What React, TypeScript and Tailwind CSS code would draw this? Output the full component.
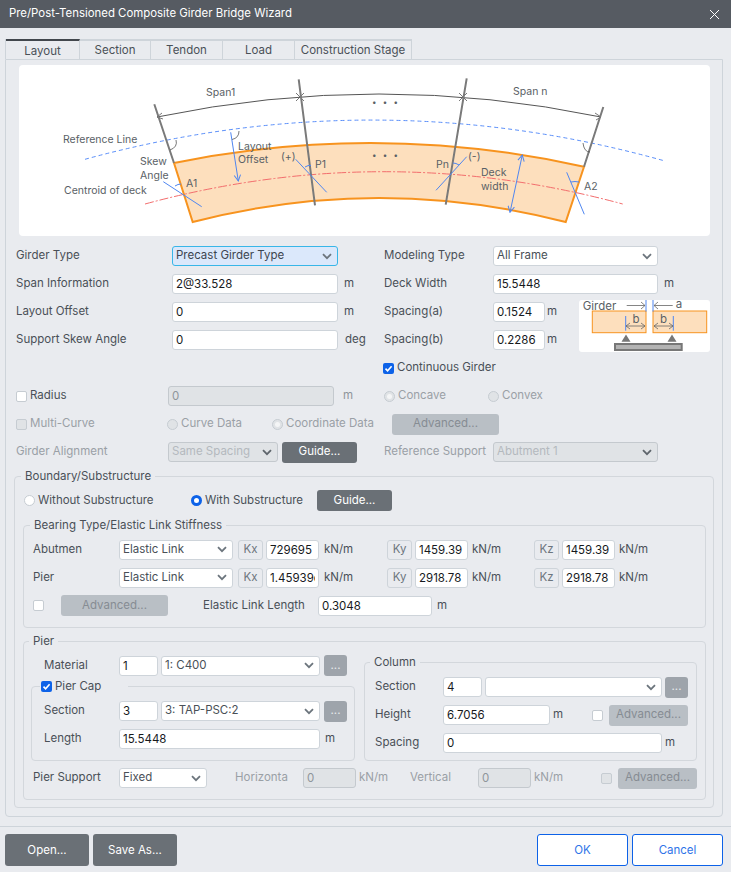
import React from "react";

const Chevron = ({ dim }: { dim?: boolean }) => (
  <svg width="10" height="7" viewBox="0 0 10 7" className="shrink-0">
    <path d="M1 1.2 L5 5.2 L9 1.2" fill="none" stroke={dim ? "#5f666d" : "#6c757d"} strokeWidth="1.8" />
  </svg>
);

const Inp = ({ v, w, off }: { v: string; w: string; off?: boolean }) => (
  <input
    readOnly
    value={v}
    className={`${w} h-[20px] shrink-0 rounded-[3px] border px-[3px] text-[11.5px] outline-none ${
      off ? "border-[#c4c9ce] bg-[#e0e3e6] text-[#8f959b]" : "border-[#ced4da] bg-white text-[#16191c]"
    }`}
  />
);

const Sel = ({ v, w, off, focus }: { v: string; w: string; off?: boolean; focus?: boolean }) => (
  <div
    className={`${w} flex h-[20px] shrink-0 items-center justify-between rounded-[3px] border pl-[3px] pr-[5px] text-[11.5px] ${
      focus
        ? "border-[#38b6e8] bg-[#dbe8fb] text-[#3d4550]"
        : off
          ? "border-[#c4c9ce] bg-[#e0e3e6] text-[#b4b9be]"
          : "border-[#ced4da] bg-white text-[#495057]"
    }`}
  >
    <span className="truncate">{v}</span>
    <Chevron dim={off} />
  </div>
);

const Btn = ({ t, w, kind }: { t: string; w: string; kind: "dark" | "off" | "dots" }) => (
  <button
    className={`${w} h-[21px] shrink-0 rounded-[3px] text-[11.5px] ${
      kind === "dark"
        ? "bg-[#6a7076] text-white"
        : kind === "off"
          ? "bg-[#b9bfc5] text-[#868c93]"
          : "bg-[#9ea4ab] text-[#e8eaec]"
    }`}
  >
    {t}
  </button>
);

const Check = ({ on, off }: { on?: boolean; off?: boolean }) =>
  on ? (
    <span className="flex h-[11px] w-[11px] shrink-0 items-center justify-center rounded-[2px] bg-[#0d62e8]">
      <svg width="9" height="9" viewBox="0 0 9 9">
        <path d="M1.5 4.6 L3.6 6.8 L7.6 2.2" fill="none" stroke="white" strokeWidth="1.6" />
      </svg>
    </span>
  ) : (
    <span
      className={`h-[11px] w-[11px] shrink-0 rounded-[2px] border border-[#c6ccd2] ${off ? "bg-[#e0e3e6]" : "bg-white"}`}
    />
  );

const Radio = ({ on, off, inner }: { on?: boolean; off?: boolean; inner?: boolean }) =>
  on ? (
    <span className="h-[11px] w-[11px] shrink-0 rounded-full border-[3px] border-[#0d62e8] bg-white" />
  ) : (
    <span
      className={`flex h-[11px] w-[11px] shrink-0 items-center justify-center rounded-full border border-[#c6ccd2] ${
        off ? "bg-[#e0e3e6]" : "bg-white"
      }`}
    >
      {inner && <span className="h-[5px] w-[5px] rounded-full bg-[#f4f5f6]" />}
    </span>
  );

const Row = ({ children, className = "" }: { children: React.ReactNode; className?: string }) => (
  <div className={`flex h-[28px] items-center ${className}`}>{children}</div>
);

const Box = ({ t }: { t: string }) => (
  <span className="ml-[5px] flex h-[20px] w-[25px] shrink-0 items-center justify-center rounded-[3px] border border-[#ced4da] text-[11.5px] text-[#6c757d]">
    {t}
  </span>
);

const Diagram = () => (
  <svg viewBox="19 65 691 171" className="block h-[171px] w-[691px]" fontFamily="Inter, sans-serif" fontSize="10.5" fill="#5a5f66">
    <defs>
      <marker id="ab" markerWidth="8" markerHeight="8" refX="7" refY="4" orient="auto-start-reverse">
        <path d="M1 .8 L7 4 L1 7.2" fill="none" stroke="#4f86f0" strokeWidth="1" />
      </marker>
    </defs>
    <path d="M174 163 Q379 121 584 166.7 L565.7 222 Q379 174 192.7 222 Z" fill="#fddfbd" stroke="#f7931e" strokeWidth="2" />
    <path d="M85 159.3 Q375 80 665 161" fill="none" stroke="#5b8ff9" strokeWidth="1" strokeDasharray="4 3" />
    <path d="M145 204 Q384 139.4 622.7 204" fill="none" stroke="#f26d6d" strokeWidth="1" strokeDasharray="9 2 2 2" />
    <path d="M157 117 Q379 71 601 117" fill="none" stroke="#555" strokeWidth="1" />
    <path d="M162 113 L157 117 L163 119 M595 113 L601 117 L596 120 M296 93 L304 101 M304 93 L296 101 M459 93 L467 101 M467 93 L459 101" fill="none" stroke="#555" strokeWidth="0.8" />
    <path d="M154.3 104.3 L174 163 M298.7 79.3 L315 205.3 M466.7 78.3 L445.7 204.7 M603.3 107 L584 166.7" stroke="#7a7a7a" strokeWidth="2" fill="none" />
    <path d="M230.7 132.3 L238.3 181" stroke="#4f86f0" strokeWidth="1" markerEnd="url(#ab)" fill="none" />
    <path d="M522.3 155 L510 212.3" stroke="#4f86f0" strokeWidth="1" markerStart="url(#ab)" markerEnd="url(#ab)" fill="none" />
    <path d="M163.3 181.7 L201.7 206.7 M295.7 159.3 L326.7 192.3 M466.7 156.7 L436 190.3 M566.7 172.3 L584.3 214.3" stroke="#4f86f0" strokeWidth="1" fill="none" />
    <path d="M175 186 Q178 184 181 184 M305 167 Q308 165 311 165.5 M453 163 Q456 163 459 165 M571 182 Q575 181 579 182" stroke="#4f86f0" strokeWidth="1" fill="none" />
    <path d="M176 140 Q178 147 170 150 M239 131 Q239 138 232 139.5 M583 143 Q584 152 590 152" stroke="#555" strokeWidth="0.8" fill="none" />
    <text x="206" y="96">Span1</text>
    <text x="513" y="95">Span n</text>
    <text x="372" y="105" fontSize="8" letterSpacing="2">• • •</text>
    <text x="372" y="158" fontSize="8" letterSpacing="2">• • •</text>
    <text x="63" y="143">Reference Line</text>
    <text x="140" y="165">Skew</text>
    <text x="140" y="179">Angle</text>
    <text x="64" y="194">Centroid of deck</text>
    <text x="186" y="187">A1</text>
    <text x="238" y="150">Layout</text>
    <text x="238" y="163">Offset</text>
    <text x="281" y="160">(+)</text>
    <text x="315" y="168">P1</text>
    <text x="436" y="168">Pn</text>
    <text x="468" y="160">(-)</text>
    <text x="481" y="176">Deck</text>
    <text x="481" y="190">width</text>
    <text x="584" y="190">A2</text>
  </svg>
);

const Mini = () => (
  <svg viewBox="0 0 131 52" className="ml-[22px] mt-[-3px] h-[52px] w-[131px] overflow-visible rounded-[3px] bg-white" fontFamily="Inter, sans-serif" fontSize="11.5" fill="#5a5f66">
    <rect x="13.3" y="11" width="53.7" height="21.7" fill="#fddfbd" stroke="#f7931e" />
    <rect x="74" y="11" width="53.7" height="21.7" fill="#fddfbd" stroke="#f7931e" />
    <rect x="36" y="44" width="66.7" height="6" fill="#b3b3b3" stroke="#777" strokeWidth="2" />
    <path d="M47 34.5 L51.5 41.7 L42.5 41.7 Z M93 34.5 L97.5 41.7 L88.5 41.7 Z" fill="#777" />
    <path d="M67 0 V11.6 M74 0 V11.6 M46.7 16 V30.7 M94.3 16 V30.7" stroke="#4f86f0" fill="none" />
    <path d="M47.7 5.5 H66 M62 2 L66 5.5 L62 9 M93.7 5.5 H75 M79 2 L75 5.5 L79 9 M47 26 H66 M51 23 L47 26 L51 29 M62 23 L66 26 L62 29 M75 26 H94 M79 23 L75 26 L79 29 M90 23 L94 26 L90 29" stroke="#666" strokeWidth="0.8" fill="none" />
    <text x="3.7" y="10">Girder</text>
    <text x="96.7" y="8">a</text>
    <text x="53.5" y="22.5">b</text>
    <text x="81" y="22.5">b</text>
  </svg>
);

const Tab = ({ t, w, active }: { t: string; w: string; active?: boolean }) => (
  <div
    className={`${w} flex h-[20px] items-center justify-center border-r border-[#ced4da] text-[11.5px] text-[#495057] ${
      active ? "border-t-2 border-t-[#42474d] pt-[3px]" : "border-t-2 border-t-[#ced4da] pt-[1px]"
    }`}
  >
    {t}
  </div>
);

const Stiff = ({ label, x, y, z }: { label: string; x: string; y: string; z: string }) => (
  <div className="mb-[8px] flex h-[20px] items-center">
    <span className="w-[86px]">{label}</span>
    <Sel v="Elastic Link" w="w-[114px]" />
    <Box t="Kx" />
    <span className="ml-[3px]"><Inp v={x} w="w-[53px]" /></span>
    <span className="ml-[5px] w-[58px]">kN/m</span>
    <Box t="Ky" />
    <span className="ml-[3px]"><Inp v={y} w="w-[53px]" /></span>
    <span className="ml-[4px] w-[57px]">kN/m</span>
    <Box t="Kz" />
    <span className="ml-[3px]"><Inp v={z} w="w-[53px]" /></span>
    <span className="ml-[4px]">kN/m</span>
  </div>
);

export default function App() {
  return (
    <div className="flex h-screen w-full flex-col overflow-hidden bg-[#e9ebef] font-[Inter,sans-serif] text-[11.5px] text-[#495057]">
      <div className="flex h-[28px] shrink-0 items-center justify-between bg-[#565b62] pl-[9px] pr-[11px] text-[11.4px] text-white">
        <span>Pre/Post-Tensioned Composite Girder Bridge Wizard</span>
        <svg width="11" height="11" viewBox="0 0 11 11">
          <path d="M1 1 L10 10 M10 1 L1 10" stroke="white" strokeWidth="1" fill="none" />
        </svg>
      </div>

      <div className="ml-[5px] mt-[11px] flex">
        <div className="flex border-l border-[#ced4da]">
          <Tab t="Layout" w="w-[74px]" active />
          <Tab t="Section" w="w-[71px]" />
          <Tab t="Tendon" w="w-[72px]" />
          <Tab t="Load" w="w-[72px]" />
          <Tab t="Construction Stage" w="w-[117px]" />
        </div>
      </div>

      <div className="ml-[5px] h-[758px] w-[718px] shrink-0 rounded-b-[4px] border border-[#ced4da]">
        <div className="ml-[13px] mt-[5px] w-[691px] overflow-hidden rounded-[4px] bg-white">
          <Diagram />
        </div>

        <div className="ml-[10px] mt-[6px]">
          <div className="flex">
            <div className="w-[368px]">
              <Row><span className="w-[156px]">Girder Type</span><Sel v="Precast Girder Type" w="w-[166px]" focus /></Row>
              <Row><span className="w-[156px]">Span Information</span><Inp v="2@33.528" w="w-[166px]" /><span className="ml-[6px]">m</span></Row>
              <Row><span className="w-[156px]">Layout Offset</span><Inp v="0" w="w-[166px]" /><span className="ml-[6px]">m</span></Row>
              <Row><span className="w-[156px]">Support Skew Angle</span><Inp v="0" w="w-[166px]" /><span className="ml-[7px]">deg</span></Row>
            </div>
            <div>
              <Row><span className="w-[109px]">Modeling Type</span><Sel v="All Frame" w="w-[165px]" /></Row>
              <Row><span className="w-[109px]">Deck Width</span><Inp v="15.5448" w="w-[165px]" /><span className="ml-[6px]">m</span></Row>
              <div className="flex">
                <div>
                  <Row><span className="w-[109px]">Spacing(a)</span><Inp v="0.1524" w="w-[52px]" /><span className="ml-[2px]">m</span></Row>
                  <Row><span className="w-[109px]">Spacing(b)</span><Inp v="0.2286" w="w-[52px]" /><span className="ml-[2px]">m</span></Row>
                </div>
                <div className="pt-[5px]"><Mini /></div>
              </div>
            </div>
          </div>

          <Row className="pl-[367px]">
            <Check on />
            <span className="ml-[3px]">Continuous Girder</span>
          </Row>

          <Row>
            <Check />
            <span className="ml-[3px] w-[138px]">Radius</span>
            <Inp v="0" w="w-[166px]" off />
            <span className="ml-[9px] w-[41px] text-[#8f959b]">m</span>
            <Radio off inner />
            <span className="ml-[3px] w-[90px] text-[#9aa0a6]">Concave</span>
            <Radio off />
            <span className="ml-[3px] text-[#9aa0a6]">Convex</span>
          </Row>

          <Row className="text-[#9aa0a6]">
            <Check off />
            <span className="ml-[3px] w-[137px]">Multi-Curve</span>
            <Radio off />
            <span className="ml-[3px] w-[91px]">Curve Data</span>
            <Radio off inner />
            <span className="ml-[3px] w-[106px]">Coordinate Data</span>
            <Btn t="Advanced..." w="w-[107px]" kind="off" />
          </Row>

          <Row>
            <span className="w-[152px] text-[#9aa0a6]">Girder Alignment</span>
            <Sel v="Same Spacing" w="w-[110px]" off />
            <span className="ml-[4px]"><Btn t="Guide..." w="w-[75px]" kind="dark" /></span>
            <span className="ml-[27px] w-[109px] whitespace-nowrap text-[#9aa0a6]">Reference Support</span>
            <Sel v="Abutment 1" w="w-[165px]" off />
          </Row>
        </div>

        <fieldset className="ml-[8px] mt-[2px] w-[700px] rounded-[4px] border border-[#d3d7dc] pb-[7px]">
          <legend className="ml-[6px] px-[4px]">Boundary/Substructure</legend>
          <div className="mt-[5px] flex h-[21px] items-center pl-[9px]">
            <Radio />
            <span className="ml-[3px] w-[153px]">Without Substructure</span>
            <Radio on />
            <span className="ml-[3px] w-[112px]">With Substructure</span>
            <Btn t="Guide..." w="w-[75px]" kind="dark" />
          </div>

          <fieldset className="ml-[8px] mt-[6px] w-[683px] rounded-[4px] border border-[#d3d7dc] pb-[3px] pl-[9px]">
            <legend className="ml-[-3px] px-[4px]">Bearing Type/Elastic Link Stiffness</legend>
            <div className="h-[5px]" />
            <Stiff label="Abutmen" x="729695" y="1459.39" z="1459.39" />
            <Stiff label="Pier" x="1.45939e+06" y="2918.78" z="2918.78" />
            <div className="mb-[8px] flex h-[20px] items-center">
              <Check />
              <span className="ml-[17px]"><Btn t="Advanced..." w="w-[107px]" kind="off" /></span>
              <span className="ml-[35px] w-[115px]">Elastic Link Length</span>
              <Inp v="0.3048" w="w-[114px]" />
              <span className="ml-[5px]">m</span>
            </div>
          </fieldset>

          <fieldset className="ml-[8px] mt-[5px] w-[683px] rounded-[4px] border border-[#d3d7dc] pb-[11px] pl-[7px]">
            <legend className="ml-[-2px] px-[4px]">Pier</legend>
            <div className="flex">
              <div className="mt-[6px] w-[333px]">
                <div className="flex h-[20px] items-center pl-[13px]">
                  <span className="w-[75px]">Material</span>
                  <Inp v="1" w="w-[39px]" />
                  <span className="ml-[3px]"><Sel v="1: C400" w="w-[159px]" /></span>
                  <span className="ml-[4px]"><Btn t="..." w="w-[23px]" kind="dots" /></span>
                </div>
                <fieldset className="mt-[2px] h-[83px] w-[324px] rounded-[4px] border border-[#d3d7dc] pl-[12px]">
                  <legend className="ml-[-4px] flex w-[88px] items-center px-[1px]">
                    <Check on />
                    <span className="ml-[3px]">Pier Cap</span>
                  </legend>
                  <div className="mt-[6px] flex h-[20px] items-center">
                    <span className="w-[75px]">Section</span>
                    <Inp v="3" w="w-[39px]" />
                    <span className="ml-[3px]"><Sel v="3: TAP-PSC:2" w="w-[159px]" /></span>
                    <span className="ml-[4px]"><Btn t="..." w="w-[23px]" kind="dots" /></span>
                  </div>
                  <div className="mt-[8px] flex h-[20px] items-center">
                    <span className="w-[75px]">Length</span>
                    <Inp v="15.5448" w="w-[201px]" />
                    <span className="ml-[5px]">m</span>
                  </div>
                </fieldset>
              </div>
              <fieldset className="mt-[4px] w-[333px] rounded-[4px] border border-[#d3d7dc] pl-[10px]">
                <legend className="ml-[-5px] px-[4px]">Column</legend>
                <div className="mt-[6px] flex h-[20px] items-center">
                  <span className="w-[68px]">Section</span>
                  <Inp v="4" w="w-[39px]" />
                  <span className="ml-[3px]"><Sel v="" w="w-[177px]" /></span>
                  <span className="ml-[3px]"><Btn t="..." w="w-[23px]" kind="dots" /></span>
                </div>
                <div className="mt-[8px] flex h-[20px] items-center">
                  <span className="w-[68px]">Height</span>
                  <Inp v="6.7056" w="w-[107px]" />
                  <span className="ml-[3px] w-[39px]">m</span>
                  <Check />
                  <span className="ml-[6px]"><Btn t="Advanced..." w="w-[79px]" kind="off" /></span>
                </div>
                <div className="mb-[7px] mt-[8px] flex h-[20px] items-center">
                  <span className="w-[68px]">Spacing</span>
                  <Inp v="0" w="w-[219px]" />
                  <span className="ml-[3px]">m</span>
                </div>
              </fieldset>
            </div>
            <div className="mt-[7px] flex h-[20px] items-center pl-[2px]">
              <span className="w-[86px]">Pier Support</span>
              <Sel v="Fixed" w="w-[88px]" />
              <span className="ml-[28px] w-[68px] text-[#9aa0a6]">Horizonta</span>
              <Inp v="0" w="w-[53px]" off />
              <span className="ml-[3px] w-[51px] text-[#9aa0a6]">kN/m</span>
              <span className="w-[68px] text-[#9aa0a6]">Vertical</span>
              <Inp v="0" w="w-[53px]" off />
              <span className="ml-[3px] w-[67px] text-[#9aa0a6]">kN/m</span>
              <Check off />
              <span className="ml-[6px]"><Btn t="Advanced..." w="w-[79px]" kind="off" /></span>
            </div>
          </fieldset>
        </fieldset>
      </div>

      <div className="mt-[9px] flex h-[46px] shrink-0 items-start justify-between border-t border-[#ced4da] px-[5px] pr-[8px] pt-[7px]">
        <div className="flex gap-[4px]">
          <button className="h-[32px] w-[84px] rounded-[3px] bg-[#6a7076] pt-[2px] text-[11.5px] text-white">Open...</button>
          <button className="h-[32px] w-[84px] rounded-[3px] bg-[#6a7076] pt-[2px] text-[11.5px] text-white">Save As...</button>
        </div>
        <div className="flex gap-[4px]">
          <button className="h-[32px] w-[91px] rounded-[3px] border border-[#0d62e8] bg-white pt-[2px] text-[11.5px] text-[#2f74e8]">OK</button>
          <button className="h-[32px] w-[91px] rounded-[3px] border border-[#0d62e8] bg-white pt-[2px] text-[11.5px] text-[#2f74e8]">Cancel</button>
        </div>
      </div>
    </div>
  );
}
